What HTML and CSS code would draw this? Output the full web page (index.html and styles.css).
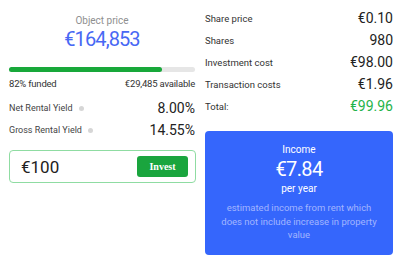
FILE: index.html
```html
<!DOCTYPE html>
<html lang="en">
<head>
    <meta charset="UTF-8">
    <meta name="viewport" content="width=device-width, initial-scale=1.0">
    <title>Invest</title>
    <link rel="stylesheet" href="styles.css">
</head>
<body>
    <div class="container">
        <div class="col">
            <div class="price">
                <div class="price-label">Object price</div>
                <div class="price-value">€164,853</div>
            </div>
            <div class="progress">
                <div class="progress-fill" style="width: 82%"></div>
            </div>
            <div class="progress-info">
                <span>82% funded</span>
                <span>€29,485 available</span>
            </div>
            <div class="yield first">
                <span class="yield-label">Net Rental Yield <i class="dot"></i></span>
                <span class="yield-value">8.00%</span>
            </div>
            <div class="yield">
                <span class="yield-label">Gross Rental Yield <i class="dot"></i></span>
                <span class="yield-value">14.55%</span>
            </div>
            <div class="invest-box">
                <span class="amount">€100</span>
                <button class="invest-btn">Invest</button>
            </div>
        </div>

        <div class="col">
            <div class="row"><span class="row-label">Share price</span><span class="row-value">€0.10</span></div>
            <div class="row"><span class="row-label">Shares</span><span class="row-value">980</span></div>
            <div class="row"><span class="row-label">Investment cost</span><span class="row-value">€98.00</span></div>
            <div class="row"><span class="row-label">Transaction costs</span><span class="row-value">€1.96</span></div>
            <div class="row"><span class="row-label">Total:</span><span class="row-value total">€99.96</span></div>

            <div class="income">
                <div class="income-title">Income</div>
                <div class="income-value">€7.84</div>
                <div class="income-title">per year</div>
                <div class="income-note">estimated income from rent which does not include increase in property value</div>
            </div>
        </div>
    </div>
</body>
</html>
```

FILE: styles.css
```css
body {
    margin: 0;
    font-family: Roboto, "Liberation Sans", sans-serif;
    background-color: #fff;
    color: #333;
}
.container {
    display: grid;
    grid-template-columns: 188px 188px;
    column-gap: 9px;
    padding: 8px 0 0 8px;
}
.col {
    display: flex;
    flex-direction: column;
}
.price {
    text-align: center;
    padding-top: 6px;
}
.price-label {
    font-size: 10px;
    color: #8f8f8f;
    line-height: 14px;
}
.price-value {
    font-size: 20px;
    letter-spacing: -0.9px;
    color: #4868f4;
    line-height: 23px;
}
.progress {
    margin: 16px 1px 0 1px;
    height: 5px;
    background-color: #e6e6e6;
    border-radius: 3px;
}
.progress-fill {
    height: 100%;
    background-color: #18a83a;
    border-radius: 3px;
}
.progress-info {
    display: flex;
    justify-content: space-between;
    font-size: 9.5px;
    letter-spacing: -0.2px;
    color: #333;
    margin: 5px 1px 0 1px;
    line-height: 14px;
}
.yield {
    display: flex;
    justify-content: space-between;
    align-items: center;
    height: 22px;
    padding: 0 1px;
}
.yield.first {
    margin-top: 6px;
}
.yield-label {
    font-size: 9px;
    color: #444;
}
.dot {
    display: inline-block;
    width: 5px;
    height: 5px;
    border-radius: 50%;
    background-color: #d6d6d6;
    margin-left: 4px;
    vertical-align: middle;
}
.yield-value {
    font-size: 14px;
    color: #222;
}
.invest-box {
    display: flex;
    justify-content: space-between;
    align-items: center;
    margin: 9px 0 0 1px;
    height: 31px;
    border: 1px solid #8fdca2;
    border-radius: 4px;
    padding: 0 7px 0 11px;
}
.amount {
    font-size: 17px;
    color: #222;
}
.invest-btn {
    width: 51px;
    height: 21px;
    background-color: #1aa53e;
    color: #fff;
    border: none;
    border-radius: 3px;
    font-family: "Liberation Serif", serif;
    font-weight: bold;
    font-size: 10px;
    padding: 0;
}
.row {
    display: flex;
    justify-content: space-between;
    align-items: center;
    height: 22px;
}
.row:first-child {
    margin-top: -1px;
}
.row-label {
    font-size: 9.5px;
    color: #333;
}
.row-value {
    font-size: 14px;
    color: #222;
}
.total {
    color: #1fb34a;
}
.income {
    margin-top: 14px;
    background-color: #3566fc;
    border-radius: 4px;
    color: #fff;
    text-align: center;
    padding: 12px 16px 12px;
    height: 100px;
}
.income-title {
    font-size: 10px;
    line-height: 14px;
}
.income-value {
    font-size: 20px;
    letter-spacing: -0.6px;
    line-height: 25px;
}
.income-note {
    margin-top: 5px;
    font-size: 9.5px;
    line-height: 13.5px;
    color: #a2b5ff;
}
```
